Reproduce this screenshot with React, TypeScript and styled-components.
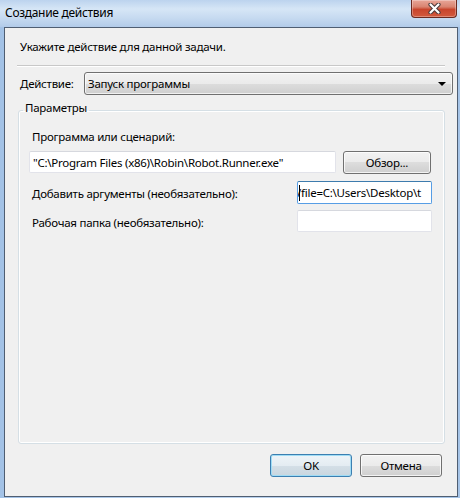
import React from 'react'
import styled, {createGlobalStyle} from 'styled-components'

const GlobalStyle = createGlobalStyle`
  html, body {
    margin: 0;
    padding: 0;
  }
  body {
    width: 460px;
    height: 498px;
    overflow: hidden;
    font-family: "Noto Sans", "Liberation Sans", sans-serif;
    font-size: 11.5px;
    letter-spacing: -0.25px;
    color: #000;
  }
`

const Window = styled.div`
  width: 460px;
  height: 498px;
  box-sizing: border-box;
  display: flex;
  flex-direction: column;
  padding: 0 2px 1px 4px;
  background:
    linear-gradient(to bottom, #bcd3ee 0, #d6e6f6 9px, #c6daf0 18px, #b2cbe9 27px, transparent 27px),
    linear-gradient(to right, #a3c2e6, #bad2ed 50%, #a6c4e7);
`

const TitleBar = styled.div`
  height: 27px;
  flex: none;
  display: flex;
  justify-content: space-between;
  align-items: flex-start;
`

const Caption = styled.div`
  margin: 5px 0 0 1px;
  line-height: 16px;
  font-size: 12px;
  letter-spacing: -0.3px;
`

const CloseButton = styled.div`
  width: 46px;
  height: 18px;
  box-sizing: border-box;
  margin-right: 1px;
  border: 1px solid #6b2a20;
  border-top: none;
  border-radius: 0 0 4px 4px;
  background: linear-gradient(to bottom, #e8a698 0, #d98471 40%, #c8452c 56%, #d25a3e 100%);
  box-shadow: inset 0 0 0 1px rgba(255, 255, 255, 0.3);
  display: flex;
  align-items: center;
  justify-content: center;
`

const Client = styled.div`
  flex: 1;
  min-height: 0;
  display: flex;
  flex-direction: column;
  border: 1px solid #4f5e72;
  background: #f0f0f0;
  padding-bottom: 19px;
`

const Instruction = styled.div`
  margin: 11px 0 0 15px;
  line-height: 16px;
`

const Separator = styled.div`
  margin: 10px 12px 0;
  height: 1px;
  background: #c8c8c8;
  border-bottom: 1px solid #fff;
`

const ActionRow = styled.div`
  display: grid;
  grid-template-columns: 64px 1fr;
  align-items: center;
  margin: 5px 4px 0 15px;
`

const Combo = styled.div`
  height: 23px;
  box-sizing: border-box;
  display: flex;
  align-items: center;
  justify-content: space-between;
  padding: 0 6px 0 3px;
  border: 1px solid #707070;
  border-radius: 3px;
  background: linear-gradient(to bottom, #f2f2f2 0, #ebebeb 50%, #dddddd 50%, #cfcfcf 100%);
  box-shadow: inset 0 0 0 1px rgba(255, 255, 255, 0.7);
`

const Arrow = styled.span`
  width: 0;
  height: 0;
  border-left: 4px solid transparent;
  border-right: 4px solid transparent;
  border-top: 4px solid #000;
`

const Group = styled.fieldset`
  flex: 1;
  min-height: 0;
  min-inline-size: 0;
  margin: 7px 12px 0 13px;
  padding: 0 0 0 4px;
  border: 1px solid #d5dfe5;
  border-radius: 3px;
  box-shadow: inset 0 0 0 1px #fff;
`

const Legend = styled.legend`
  padding: 0 2px 4px;
  line-height: 12px;
`

const GroupBody = styled.div`
  padding: 11px 0 0 6px;
`

const Label = styled.div<{$nudge?: number}>`
  padding-left: 3px;
  padding-top: ${p => p.$nudge ?? 0}px;
  line-height: 16px;
`

const PathRow = styled.div`
  display: flex;
  align-items: flex-start;
  gap: 7px;
  margin-top: 6px;
`

const Field = styled.div<{$w: number; $h: number; $focused?: boolean}>`
  position: relative;
  width: ${p => p.$w}px;
  height: ${p => p.$h}px;
  box-sizing: border-box;
  display: flex;
  align-items: center;
  overflow: hidden;
  white-space: nowrap;
  padding: 0 ${p => (p.$focused ? '0' : '3px')};
  background: #fff;
  border: 1px solid ${p => (p.$focused ? '#569de5' : '#e2e3ea')};
  border-top-color: ${p => (p.$focused ? '#3d7bad' : '#d6d8de')};
  border-radius: 2px;
`

const Caret = styled.span`
  position: absolute;
  left: 1px;
  top: 3px;
  width: 1px;
  height: 16px;
  background: #000;
`

const Scrolled = styled.span`
  flex: none;
  margin-left: -1px;
`

const ArgsGrid = styled.div`
  display: grid;
  grid-template-columns: 268px 135px;
  row-gap: 6px;
  margin-top: 7px;
  align-items: center;
`

const Button = styled.div<{$w: number; $default?: boolean}>`
  width: ${p => p.$w}px;
  height: 23px;
  box-sizing: border-box;
  flex: none;
  display: flex;
  align-items: center;
  justify-content: center;
  border: 1px solid ${p => (p.$default ? '#3c7fb1' : '#707070')};
  border-radius: 3px;
  background: ${p =>
    p.$default
      ? 'linear-gradient(to bottom, #eef4f8 0, #e4ecf2 50%, #d4dfe7 50%, #c9d6df 100%)'
      : 'linear-gradient(to bottom, #f2f2f2 0, #ebebeb 50%, #dddddd 50%, #cfcfcf 100%)'};
  box-shadow: inset 0 0 0 1px ${p => (p.$default ? '#9fdcf5' : 'rgba(255, 255, 255, 0.75)')};
`

const Footer = styled.div`
  display: flex;
  justify-content: flex-end;
  gap: 8px;
  margin: 10px 15px 0 0;
`

const CloseGlyph = () => (
  <svg width="13" height="11" viewBox="0 0 13 11">
    <path d="M2.5 1.5 L10.5 9.5 M10.5 1.5 L2.5 9.5" stroke="#4a3a3a" strokeWidth="4.2" strokeLinecap="round" />
    <path d="M2.5 1.5 L10.5 9.5 M10.5 1.5 L2.5 9.5" stroke="#fff" strokeWidth="2.2" strokeLinecap="round" />
  </svg>
)

export default function App() {
  return (
    <>
      <GlobalStyle />
      <Window>
        <TitleBar>
          <Caption>Создание действия</Caption>
          <CloseButton>
            <CloseGlyph />
          </CloseButton>
        </TitleBar>
        <Client>
          <Instruction>Укажите действие для данной задачи.</Instruction>
          <Separator />
          <ActionRow>
            <span>Действие:</span>
            <Combo>
              <span>Запуск программы</span>
              <Arrow />
            </Combo>
          </ActionRow>
          <Group>
            <Legend>Параметры</Legend>
            <GroupBody>
              <Label>Программа или сценарий:</Label>
              <PathRow>
                <Field $w={307} $h={22}>
                  {'"C:\\Program Files (x86)\\Robin\\Robot.Runner.exe"'}
                </Field>
                <Button $w={88}>Обзор...</Button>
              </PathRow>
              <ArgsGrid>
                <Label $nudge={3}>Добавить аргументы (необязательно):</Label>
                <Field $w={135} $h={23} $focused>
                  <Scrolled>{'/file=C:\\Users\\Desktop\\t'}</Scrolled>
                  <Caret />
                </Field>
                <Label $nudge={3}>Рабочая папка (необязательно):</Label>
                <Field $w={135} $h={22} />
              </ArgsGrid>
            </GroupBody>
          </Group>
          <Footer>
            <Button $w={82} $default>
              OK
            </Button>
            <Button $w={82}>Отмена</Button>
          </Footer>
        </Client>
      </Window>
    </>
  )
}
